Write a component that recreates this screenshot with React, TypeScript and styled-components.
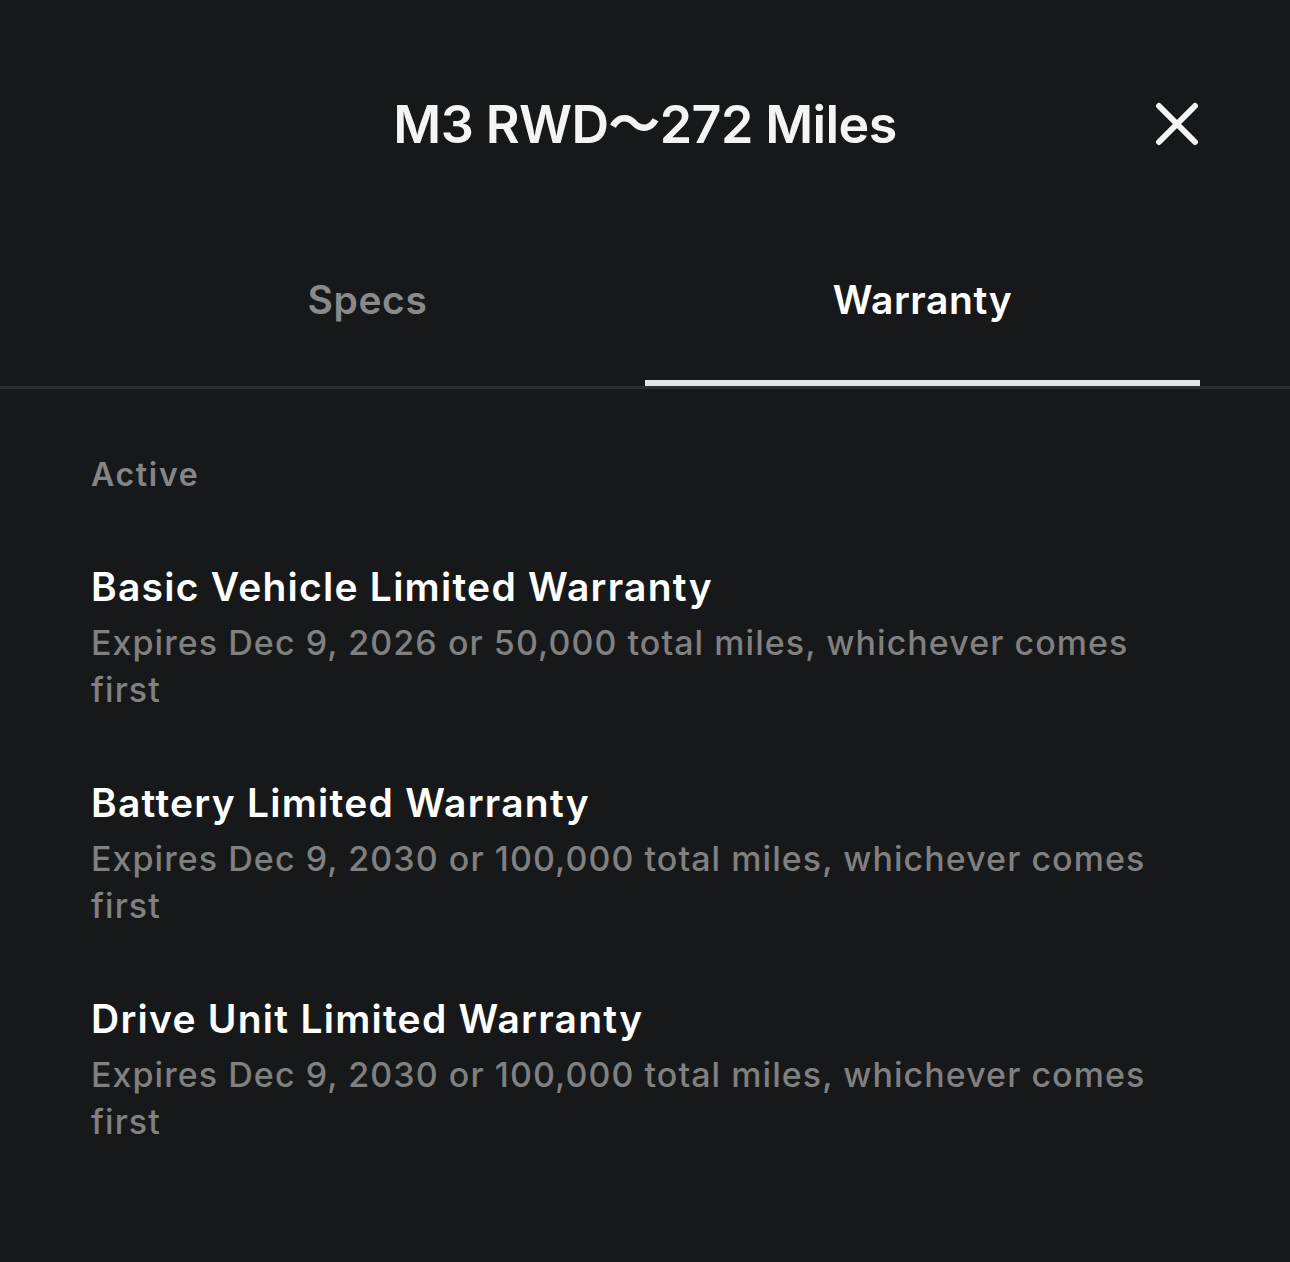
import styled, { createGlobalStyle } from "styled-components";

const Global = createGlobalStyle`
  html, body {
    margin: 0;
    padding: 0;
    background: #17181a;
  }
  * { box-sizing: border-box; }
`;

const warranties = [
  {
    title: "Basic Vehicle Limited Warranty",
    detail: "Expires Dec 9, 2026 or 50,000 total miles, whichever comes first",
  },
  {
    title: "Battery Limited Warranty",
    detail: "Expires Dec 9, 2030 or 100,000 total miles, whichever comes first",
  },
  {
    title: "Drive Unit Limited Warranty",
    detail: "Expires Dec 9, 2030 or 100,000 total miles, whichever comes first",
  },
];

const App = () => {
  return (
    <Page>
      <Global />
      <Header>
        <Title>M3 RWD～272 Miles</Title>
        <CloseButton aria-label="Close">
          <svg width="44" height="44" viewBox="0 0 44 44">
            <path
              d="M4 4 L40 40 M40 4 L4 40"
              stroke="#f4f4f4"
              strokeWidth="6"
              strokeLinecap="round"
            />
          </svg>
        </CloseButton>
      </Header>
      <TabBar>
        <TabRow>
          <Tab>Specs</Tab>
          <Tab $active>Warranty</Tab>
        </TabRow>
      </TabBar>
      <Content>
        <SectionLabel>Active</SectionLabel>
        <List>
          {warranties.map((w) => (
            <Item key={w.title}>
              <ItemTitle>{w.title}</ItemTitle>
              <ItemDetail>{w.detail}</ItemDetail>
            </Item>
          ))}
        </List>
      </Content>
    </Page>
  );
};

export default App;

const Page = styled.div`
  width: 1290px;
  height: 1262px;
  background: #17181a;
  color: #f4f4f4;
  font-family: Inter, "Noto Sans", sans-serif;
  overflow: hidden;
`;

const Header = styled.div`
  position: relative;
  height: 250px;
  display: flex;
  justify-content: center;
  padding-top: 92px;
`;

const Title = styled.h1`
  margin: 0;
  font-family: Inter, "Noto Sans CJK JP", sans-serif;
  font-size: 52px;
  font-weight: 600;
  line-height: 66px;
  letter-spacing: -0.6px;
  color: #f4f4f4;
`;

const CloseButton = styled.button`
  position: absolute;
  top: 102px;
  right: 91px;
  width: 44px;
  height: 44px;
  padding: 0;
  border: none;
  background: none;
  display: flex;
`;

const TabBar = styled.div`
  border-bottom: 3px solid #2b2c2e;
  padding: 0 90px;
`;

const TabRow = styled.div`
  display: grid;
  grid-template-columns: 1fr 1fr;
`;

const Tab = styled.div<{ $active?: boolean }>`
  height: 136px;
  display: flex;
  justify-content: center;
  padding-top: 26px;
  font-size: 39px;
  font-weight: 600;
  letter-spacing: 0.6px;
  color: ${(p) => (p.$active ? "#ffffff" : "#8a8a8a")};
  border-bottom: 6px solid ${(p) => (p.$active ? "#e2e2e2" : "transparent")};
`;

const Content = styled.div`
  padding: 64px 90px 0 91px;
`;

const SectionLabel = styled.div`
  font-size: 32px;
  font-weight: 600;
  letter-spacing: 1.7px;
  color: #858585;
  line-height: 44px;
`;

const List = styled.div`
  display: flex;
  flex-direction: column;
  gap: 66px;
  margin-top: 66px;
`;

const Item = styled.div`
  display: flex;
  flex-direction: column;
  gap: 8px;
`;

const ItemTitle = styled.div`
  font-size: 39px;
  font-weight: 600;
  letter-spacing: 1.25px;
  line-height: 48px;
  color: #ffffff;
`;

const ItemDetail = styled.div`
  font-size: 34px;
  font-weight: 500;
  letter-spacing: 1.05px;
  line-height: 47px;
  color: #808080;
`;
